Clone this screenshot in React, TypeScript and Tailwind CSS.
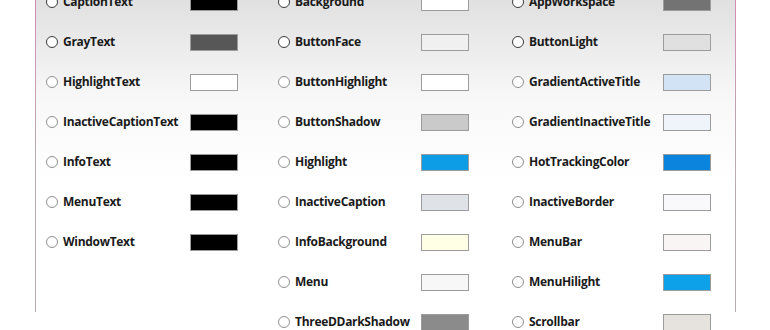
import React from "react";

type Item = { name: string; color: string; dark?: boolean };

const col1: Item[] = [
  { name: "CaptionText", color: "#000000", dark: true },
  { name: "GrayText", color: "#575757", dark: true },
  { name: "HighlightText", color: "#ffffff" },
  { name: "InactiveCaptionText", color: "#000000" },
  { name: "InfoText", color: "#000000" },
  { name: "MenuText", color: "#000000" },
  { name: "WindowText", color: "#000000" },
];
const col2: Item[] = [
  { name: "Background", color: "#ffffff", dark: true },
  { name: "ButtonFace", color: "#f0f0f0", dark: true },
  { name: "ButtonHighlight", color: "#ffffff" },
  { name: "ButtonShadow", color: "#cacaca" },
  { name: "Highlight", color: "#0c9de6" },
  { name: "InactiveCaption", color: "#dfe3e8" },
  { name: "InfoBackground", color: "#ffffe6" },
  { name: "Menu", color: "#f7f7f7" },
  { name: "ThreeDDarkShadow", color: "#8b8b8b" },
];
const col3: Item[] = [
  { name: "AppWorkspace", color: "#737373", dark: true },
  { name: "ButtonLight", color: "#e0e0e0", dark: true },
  { name: "GradientActiveTitle", color: "#d2e3f5" },
  { name: "GradientInactiveTitle", color: "#eff4fb" },
  { name: "HotTrackingColor", color: "#0b84de" },
  { name: "InactiveBorder", color: "#f9f9fb" },
  { name: "MenuBar", color: "#f8f5f4" },
  { name: "MenuHilight", color: "#0ca1e8" },
  { name: "Scrollbar", color: "#e6e2de" },
];

function Row({ item, labelW }: { item: Item; labelW: string }) {
  return (
    <div className="flex h-[40px] items-center">
      <div className={`flex items-center ${labelW}`}>
        <span
          className={
            item.dark
              ? "box-border h-[12px] w-[12px] rounded-full border border-[#3a3a3a] bg-white"
              : "box-border h-[12px] w-[12px] rounded-full border border-[#8f8f8f] bg-white"
          }
        />
        <span className="ml-[5px] text-[12px] font-bold tracking-[-0.3px] text-[#1a1a1a] leading-none whitespace-nowrap">
          {item.name}
        </span>
      </div>
      <div
        className="box-border h-[17px] w-[48px] border border-[#9c9c9c]"
        style={{ backgroundColor: item.color }}
      />
    </div>
  );
}

export default function App() {
  return (
    <div
      className="relative h-[330px] w-[770px] overflow-hidden bg-white"
      style={{ fontFamily: '"Open Sans", "Noto Sans", sans-serif' }}
    >
      <div className="ml-[35px] h-[330px] w-[701px] bg-gradient-to-b from-[#d986ac] via-[#b9aab2] to-[#b3adb0] px-[1px]">
        <div className="h-full bg-gradient-to-b from-[#dcdcdc] via-[#f8f8f8] via-35% to-white to-60%">
          <div className="-mt-[18px] flex pl-[10px]">
            <div className="w-[232px]">
              {col1.map((it) => (
                <Row key={it.name} item={it} labelW="w-[144px]" />
              ))}
            </div>
            <div className="w-[234px]">
              {col2.map((it) => (
                <Row key={it.name} item={it} labelW="w-[143px]" />
              ))}
            </div>
            <div className="flex-1">
              {col3.map((it) => (
                <Row key={it.name} item={it} labelW="w-[151px]" />
              ))}
            </div>
          </div>
        </div>
      </div>
    </div>
  );
}
